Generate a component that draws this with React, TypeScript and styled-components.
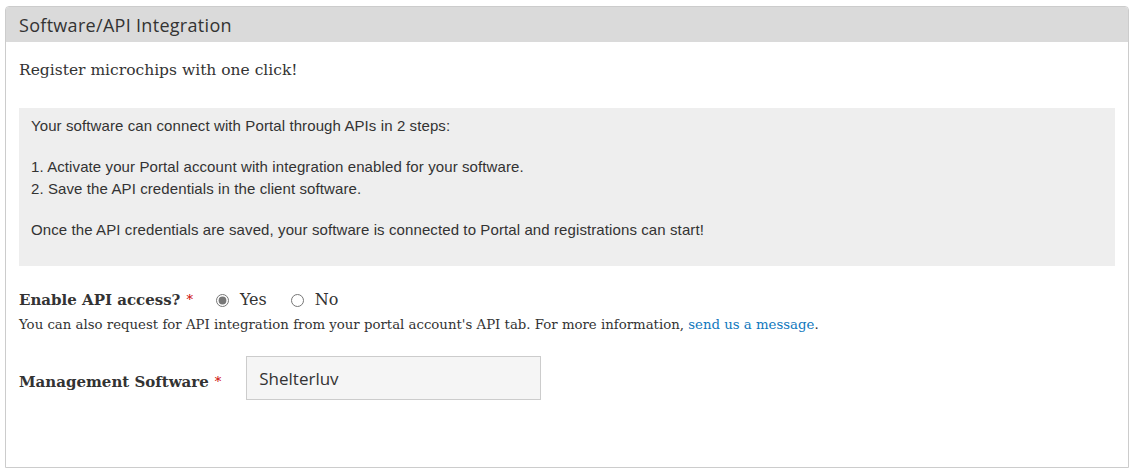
import { createGlobalStyle } from 'styled-components';
import styled from 'styled-components';

const GlobalStyle = createGlobalStyle`
  body {
    margin: 0;
    background: #fff;
    font-family: 'DejaVu Serif', Georgia, serif;
    color: #333;
  }
`;

const Page = styled.div`
  padding: 6px 5px 6px 5px;
`;

const Panel = styled.section`
  border: 1px solid #ccc;
  border-radius: 4px 4px 0 0;
  height: 462px;
  box-sizing: border-box;
  background: #fff;
`;

const PanelHeader = styled.div`
  background: #dadada;
  height: 35px;
  padding: 0 13px;
  display: flex;
  align-items: center;
  font-family: 'Open Sans', 'Noto Sans', sans-serif;
  font-size: 18px;
  letter-spacing: 0.3px;
  color: #333;
  border-radius: 3px 3px 0 0;
`;

const PanelBody = styled.div`
  padding: 17px 13px 0 13px;
`;

const Lead = styled.p`
  margin: 0 0 27px;
  font-size: 15.5px;
  line-height: 22px;
`;

const InfoBox = styled.div`
  background: #eee;
  padding: 7px 12px 25px;
  font-family: 'Liberation Sans', Arial, sans-serif;
  font-size: 15px;
  letter-spacing: 0.1px;
  line-height: 22px;
  color: #333;
  margin-bottom: 23px;
`;

const InfoLine = styled.div<{ $gap?: boolean }>`
  margin-top: ${({ $gap }) => ($gap ? '19px' : '0')};
`;

const FieldRow = styled.div`
  display: flex;
  align-items: center;
  line-height: 22px;
`;

const Label = styled.label`
  font-weight: bold;
  font-size: 15px;
  color: #333;
`;

const Req = styled.span`
  color: #c00;
  font-size: 13px;
  margin-left: 6px;
  vertical-align: top;
  font-weight: normal;
`;

const RadioOption = styled.label`
  display: inline-flex;
  align-items: center;
  font-size: 16px;
  margin-left: 23px;
  gap: 11px;
  & + & {
    margin-left: 24px;
  }
`;

const Radio = styled.input`
  margin: 0;
  width: 13px;
  height: 13px;
  accent-color: #777;
`;

const Help = styled.p`
  margin: 4px 0 0;
  font-size: 13.3px;
  line-height: 20px;
`;

const Link = styled.a`
  color: #1078bd;
  text-decoration: none;
`;

const SoftwareRow = styled(FieldRow)`
  margin-top: 21px;
  gap: 25px;
`;

const SoftwareLabel = styled(Label)`
  padding-top: 7px;
`;

const TextInput = styled.input`
  width: 295px;
  height: 44px;
  box-sizing: border-box;
  border: 1px solid #ccc;
  background: #f5f5f5;
  padding: 0 12px;
  font-family: 'Open Sans', 'Noto Sans', sans-serif;
  font-size: 17px;
  color: #333;
  outline: none;
`;

export default function App() {
  return (
    <>
      <GlobalStyle />
      <Page>
        <Panel>
          <PanelHeader>Software/API Integration</PanelHeader>
          <PanelBody>
            <Lead>Register microchips with one click!</Lead>
            <InfoBox>
              <InfoLine>Your software can connect with Portal through APIs in 2 steps:</InfoLine>
              <InfoLine $gap>1. Activate your Portal account with integration enabled for your software.</InfoLine>
              <InfoLine>2. Save the API credentials in the client software.</InfoLine>
              <InfoLine $gap>
                Once the API credentials are saved, your software is connected to Portal and registrations can start!
              </InfoLine>
            </InfoBox>
            <FieldRow>
              <Label>
                Enable API access?<Req>*</Req>
              </Label>
              <RadioOption>
                <Radio type="radio" name="api" defaultChecked />
                Yes
              </RadioOption>
              <RadioOption>
                <Radio type="radio" name="api" />
                No
              </RadioOption>
            </FieldRow>
            <Help>
              You can also request for API integration from your portal account's API tab. For more information,{' '}
              <Link href="#">send us a message</Link>.
            </Help>
            <SoftwareRow>
              <SoftwareLabel>
                Management Software<Req>*</Req>
              </SoftwareLabel>
              <TextInput defaultValue="Shelterluv" readOnly />
            </SoftwareRow>
          </PanelBody>
        </Panel>
      </Page>
    </>
  );
}
